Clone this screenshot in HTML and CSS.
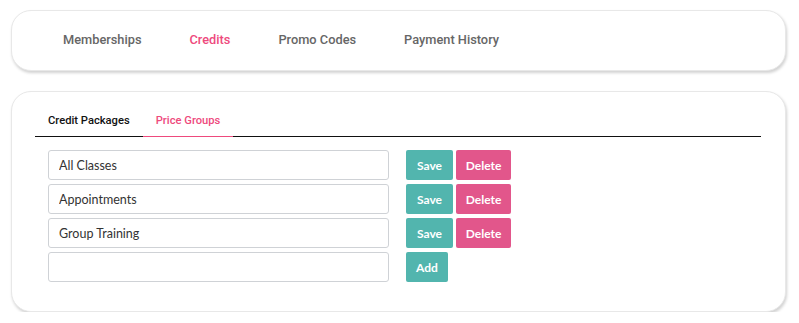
FILE: index.html
```html
<!DOCTYPE html>
<html lang="en">
<head>
  <meta charset="UTF-8" />
  <meta name="viewport" content="width=device-width, initial-scale=1.0" />
  <title>Credits - Price Groups</title>
  <link rel="stylesheet" href="styles.css">
</head>
<body>
  <div class="card top-nav">
    <a class="nav-link">Memberships</a>
    <a class="nav-link active">Credits</a>
    <a class="nav-link">Promo Codes</a>
    <a class="nav-link">Payment History</a>
  </div>

  <div class="card panel">
    <div class="tabs">
      <a class="tab">Credit Packages</a>
      <a class="tab active">Price Groups</a>
    </div>

    <div class="groups">
      <div class="group-row">
        <input class="group-input" type="text" value="All Classes">
        <button class="btn btn-save">Save</button>
        <button class="btn btn-delete">Delete</button>
      </div>
      <div class="group-row">
        <input class="group-input" type="text" value="Appointments">
        <button class="btn btn-save">Save</button>
        <button class="btn btn-delete">Delete</button>
      </div>
      <div class="group-row">
        <input class="group-input" type="text" value="Group Training">
        <button class="btn btn-save">Save</button>
        <button class="btn btn-delete">Delete</button>
      </div>
      <div class="group-row">
        <input class="group-input" type="text" value="">
        <button class="btn btn-save btn-add">Add</button>
      </div>
    </div>
  </div>
</body>
</html>
```

FILE: styles.css
```css
body { margin: 0; padding: 10px 13px 0 11px; background: #fff; font-family: Roboto, Arial, sans-serif; }
.card { background: #fff; border: 1px solid #e8e8e8; border-radius: 20px; box-shadow: 1px 2px 3px rgba(0,0,0,0.18); box-sizing: border-box; }

.top-nav { height: 61px; display: flex; align-items: center; gap: 48px; padding: 0 0 2px 51px; }
.nav-link { font-size: 12.8px; font-weight: 500; color: #666; cursor: pointer; }
.nav-link.active { color: #ee4a7d; }

.panel { margin-top: 20px; height: 221px; padding: 13px 24px 0 23px; }
.tabs { display: flex; border-bottom: 1px solid #111; }
.tab { font-size: 11.2px; font-weight: 500; color: #111; padding: 9px 13px 9px; line-height: 13px; cursor: pointer; }
.tab.active { color: #ee4a7d; border-bottom: 1px solid #ee4a7d; margin-bottom: -1px; }

.groups { padding: 13px 0 0 13px; display: flex; flex-direction: column; gap: 4px; }
.group-row { display: flex; align-items: center; }
.group-input { width: 341px; height: 30px; box-sizing: border-box; border: 1px solid #cfd2d6; border-radius: 3px; padding: 0 10px; font-family: Lato, "Open Sans", sans-serif; font-size: 12.5px; color: #333; margin-right: 17px; }
.btn { height: 30px; border: none; border-radius: 2px; color: #fff; font-family: Lato, "Open Sans", sans-serif; font-size: 12px; font-weight: bold; padding: 0; cursor: pointer; }
.btn-save { background: #52b5ae; width: 47px; }
.btn-delete { background: #e2568b; width: 55px; margin-left: 3px; }
.btn-add { width: 42px; }
```
